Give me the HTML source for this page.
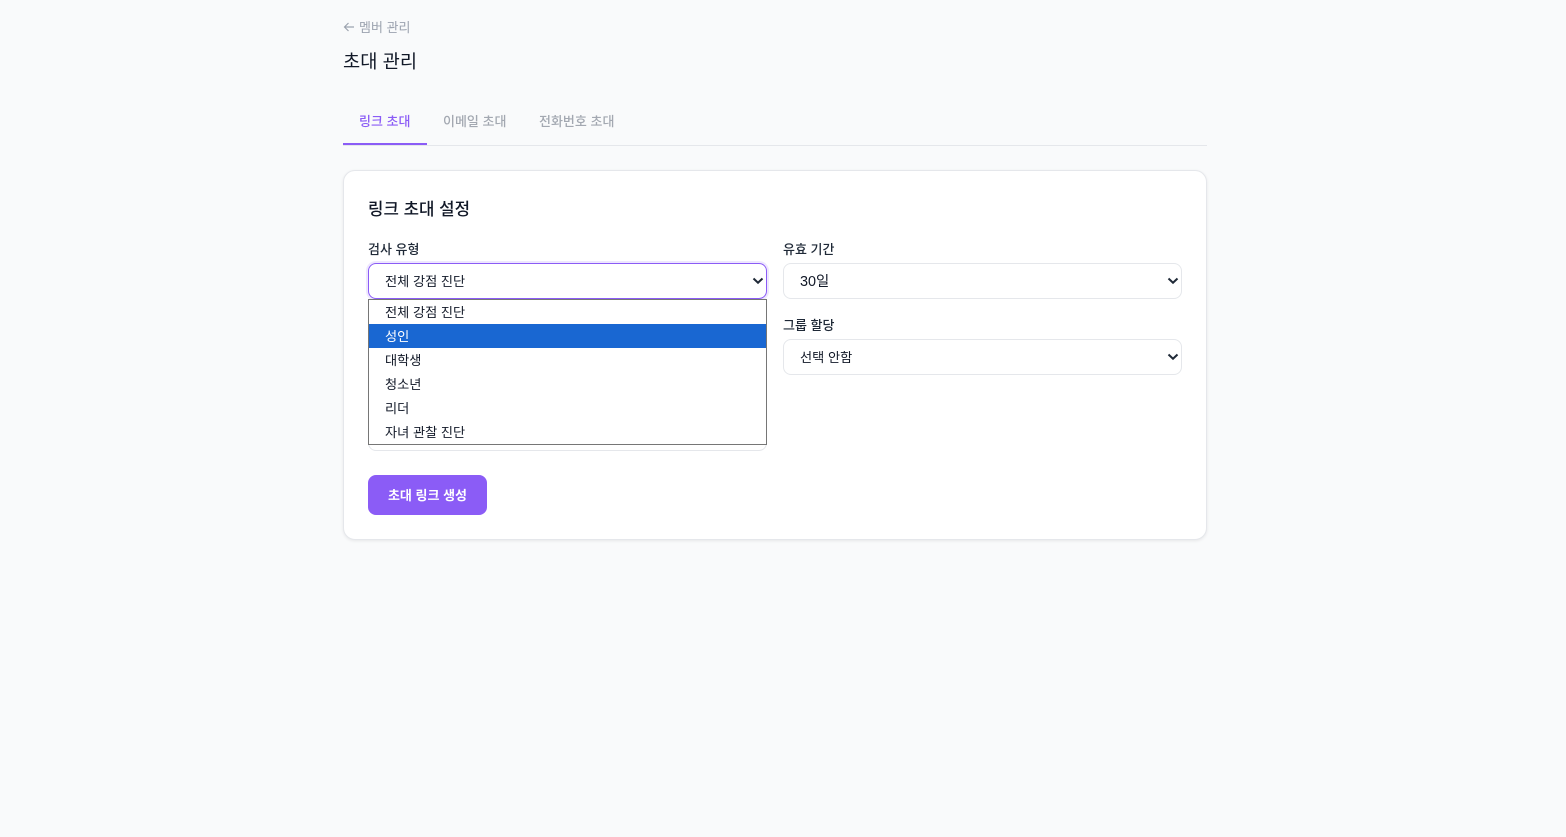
<!DOCTYPE html>
<html lang="ko">
<head>
<meta charset="utf-8">
<title>초대 관리</title>
<style>
*{box-sizing:border-box;margin:0;padding:0}
html,body{width:1566px;height:837px;overflow:hidden;background:#f9fafb;font-family:"Noto Sans CJK KR","Liberation Sans",sans-serif;color:#111827}
.a{position:absolute;white-space:nowrap;line-height:20px}
.sel{position:absolute;background:#fff;border:1px solid #e5e7eb;border-radius:8px;height:36px;font-size:13.2px;line-height:34px;padding-left:16px;color:#111827}
.sel svg{position:absolute;right:2px;top:13px}
.opt{position:absolute;left:0;width:397px;height:24px;line-height:24px;font-size:13.2px;padding-left:16px;color:#111827}
</style>
</head>
<body>
<svg class="a" style="left:343px;top:21px" width="12" height="12" viewBox="0 0 12 12" fill="none" stroke="#9ca3af" stroke-width="1.2"><path d="M11 6H1.500M5.500 2 1.500 6l4 4"/></svg>
<div class="a" style="left:359px;top:17px;font-size:13px;color:#9ca3af">멤버 관리</div>
<div class="a" style="left:343px;top:47px;font-size:18.72px;line-height:28px;color:#111827">초대 관리</div>

<div class="a" style="left:343px;top:145px;width:864px;height:1px;background:#e5e7eb"></div>
<div class="a" style="left:343px;top:143px;width:84px;height:2px;background:#8b5cf6"></div>
<div class="a" style="left:359px;top:111px;font-size:13px;font-weight:500;color:#8b5cf6">링크 초대</div>
<div class="a" style="left:443px;top:111px;font-size:13px;font-weight:500;color:#a3a8b1">이메일 초대</div>
<div class="a" style="left:539px;top:111px;font-size:13px;font-weight:500;color:#a3a8b1">전화번호 초대</div>

<div class="a" style="left:343px;top:170px;width:864px;height:370px;background:#fff;border:1px solid #e5e7eb;border-radius:12px;box-shadow:0 1px 3px rgba(0,0,0,.08)"></div>
<div class="a" style="left:368px;top:197px;font-size:16.8px;line-height:22px;font-weight:500;color:#111827">링크 초대 설정</div>

<div class="a" style="left:368px;top:239px;font-size:13px;font-weight:500;color:#1f2937">검사 유형</div>
<div class="sel" style="left:368px;top:263px;width:399px;border-color:#8b5cf6;box-shadow:0 0 0 2px rgba(139,92,246,.15)">전체 강점 진단
<svg width="12" height="8" viewBox="0 0 12 8" fill="none" stroke="#1f2937" stroke-width="2"><path d="M1.500 1.500 6 5.700l4.500-4.200"/></svg></div>

<div class="a" style="left:783px;top:239px;font-size:13px;font-weight:500;color:#1f2937">유효 기간</div>
<div class="sel" style="left:783px;top:263px;width:399px;font-family:'Liberation Sans','Noto Sans CJK KR',sans-serif;font-size:14.4px;line-height:36px">30일
<svg width="12" height="8" viewBox="0 0 12 8" fill="none" stroke="#1f2937" stroke-width="2"><path d="M1.500 1.500 6 5.700l4.500-4.200"/></svg></div>

<div class="a" style="left:783px;top:315px;font-size:13px;font-weight:500;color:#1f2937">그룹 할당</div>
<div class="sel" style="left:783px;top:339px;width:399px">선택 안함
<svg width="12" height="8" viewBox="0 0 12 8" fill="none" stroke="#1f2937" stroke-width="2"><path d="M1.500 1.500 6 5.700l4.500-4.200"/></svg></div>

<div class="a" style="left:368px;top:415px;width:399px;height:36px;background:#fff;border:1px solid #e5e7eb;border-radius:8px"></div>

<div class="a" style="left:368px;top:299px;width:399px;height:146px;background:#fff;border:1px solid #767676">
  <div class="opt" style="top:0">전체 강점 진단</div>
  <div class="opt" style="top:24px;background:#1967d2;color:#fff">성인</div>
  <div class="opt" style="top:48px">대학생</div>
  <div class="opt" style="top:72px">청소년</div>
  <div class="opt" style="top:96px">리더</div>
  <div class="opt" style="top:120px">자녀 관찰 진단</div>
</div>

<div class="a" style="left:368px;top:475px;width:119px;height:40px;line-height:40px;background:#8b5cf6;border-radius:8px;color:#fff;font-size:13px;font-weight:700;text-align:center">초대 링크 생성</div>
</body>
</html>
